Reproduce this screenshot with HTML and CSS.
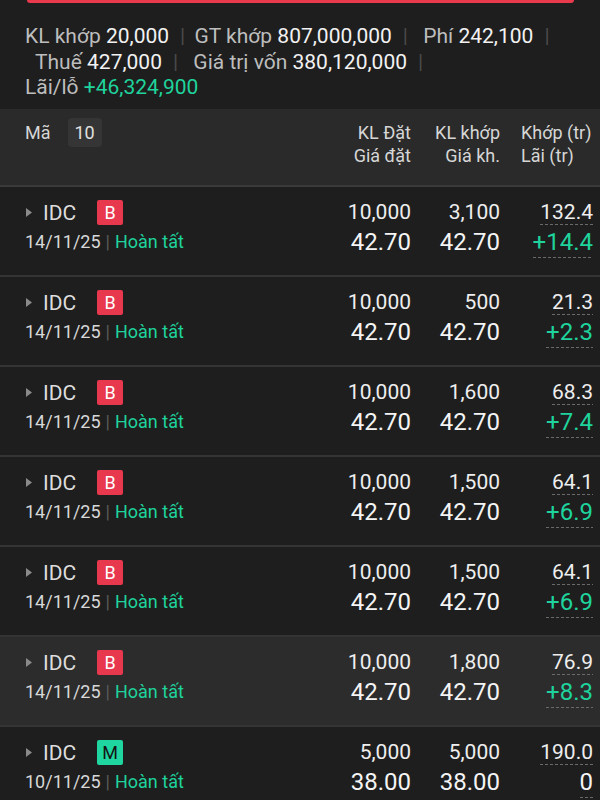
FILE: index.html
```html
<!DOCTYPE html>
<html lang="vi">
<head>
  <meta charset="UTF-8">
  <meta name="viewport" content="width=device-width, initial-scale=1.0">
  <title>Lệnh khớp</title>
  <link rel="stylesheet" href="styles.css">
</head>
<body>
  <div class="topbar"></div>

  <div class="summary">
    <div class="sum-line">
      <span class="lbl">KL khớp</span> <span class="val">20,000</span><span class="sep">|</span>
      <span class="lbl">GT khớp</span> <span class="val">807,000,000</span><span class="sep">|</span>
      <span class="lbl wide">Phí</span> <span class="val">242,100</span><span class="sep">|</span>
    </div>
    <div class="sum-line indent">
      <span class="lbl">Thuế</span> <span class="val">427,000</span><span class="sep">|</span>
      <span class="lbl wide">Giá trị vốn</span> <span class="val">380,120,000</span><span class="sep">|</span>
    </div>
    <div class="sum-line">
      <span class="lbl">Lãi/lỗ</span> <span class="val up">+46,324,900</span>
    </div>
  </div>

  <div class="thead">
    <div class="th-code">Mã <span class="count">10</span></div>
    <div class="th-num">KL Đặt<br>Giá đặt</div>
    <div class="th-num">KL khớp<br>Giá kh.</div>
    <div class="th-last">Khớp (tr)<br>Lãi (tr)</div>
  </div>

  <div class="list">
    <div class="row">
      <div class="code"><svg class="caret" width="6" height="9" viewBox="0 0 6 9"><path d="M0 0L6 4.5L0 9Z"/></svg>IDC<span class="side buy">B</span></div>
      <div class="n1">10,000</div>
      <div class="n1">3,100</div>
      <div class="n1 last"><span class="dash">132.4</span></div>
      <div class="meta">14/11/25<span class="bar">|</span><span class="status">Hoàn tất</span></div>
      <div class="n2">42.70</div>
      <div class="n2">42.70</div>
      <div class="n2 last"><span class="dash up">+14.4</span></div>
    </div>
    <div class="row">
      <div class="code"><svg class="caret" width="6" height="9" viewBox="0 0 6 9"><path d="M0 0L6 4.5L0 9Z"/></svg>IDC<span class="side buy">B</span></div>
      <div class="n1">10,000</div>
      <div class="n1">500</div>
      <div class="n1 last"><span class="dash">21.3</span></div>
      <div class="meta">14/11/25<span class="bar">|</span><span class="status">Hoàn tất</span></div>
      <div class="n2">42.70</div>
      <div class="n2">42.70</div>
      <div class="n2 last"><span class="dash up">+2.3</span></div>
    </div>
    <div class="row">
      <div class="code"><svg class="caret" width="6" height="9" viewBox="0 0 6 9"><path d="M0 0L6 4.5L0 9Z"/></svg>IDC<span class="side buy">B</span></div>
      <div class="n1">10,000</div>
      <div class="n1">1,600</div>
      <div class="n1 last"><span class="dash">68.3</span></div>
      <div class="meta">14/11/25<span class="bar">|</span><span class="status">Hoàn tất</span></div>
      <div class="n2">42.70</div>
      <div class="n2">42.70</div>
      <div class="n2 last"><span class="dash up">+7.4</span></div>
    </div>
    <div class="row">
      <div class="code"><svg class="caret" width="6" height="9" viewBox="0 0 6 9"><path d="M0 0L6 4.5L0 9Z"/></svg>IDC<span class="side buy">B</span></div>
      <div class="n1">10,000</div>
      <div class="n1">1,500</div>
      <div class="n1 last"><span class="dash">64.1</span></div>
      <div class="meta">14/11/25<span class="bar">|</span><span class="status">Hoàn tất</span></div>
      <div class="n2">42.70</div>
      <div class="n2">42.70</div>
      <div class="n2 last"><span class="dash up">+6.9</span></div>
    </div>
    <div class="row">
      <div class="code"><svg class="caret" width="6" height="9" viewBox="0 0 6 9"><path d="M0 0L6 4.5L0 9Z"/></svg>IDC<span class="side buy">B</span></div>
      <div class="n1">10,000</div>
      <div class="n1">1,500</div>
      <div class="n1 last"><span class="dash">64.1</span></div>
      <div class="meta">14/11/25<span class="bar">|</span><span class="status">Hoàn tất</span></div>
      <div class="n2">42.70</div>
      <div class="n2">42.70</div>
      <div class="n2 last"><span class="dash up">+6.9</span></div>
    </div>
    <div class="row active">
      <div class="code"><svg class="caret" width="6" height="9" viewBox="0 0 6 9"><path d="M0 0L6 4.5L0 9Z"/></svg>IDC<span class="side buy">B</span></div>
      <div class="n1">10,000</div>
      <div class="n1">1,800</div>
      <div class="n1 last"><span class="dash">76.9</span></div>
      <div class="meta">14/11/25<span class="bar">|</span><span class="status">Hoàn tất</span></div>
      <div class="n2">42.70</div>
      <div class="n2">42.70</div>
      <div class="n2 last"><span class="dash up">+8.3</span></div>
    </div>
    <div class="row">
      <div class="code"><svg class="caret" width="6" height="9" viewBox="0 0 6 9"><path d="M0 0L6 4.5L0 9Z"/></svg>IDC<span class="side sell">M</span></div>
      <div class="n1">5,000</div>
      <div class="n1">5,000</div>
      <div class="n1 last"><span class="dash">190.0</span></div>
      <div class="meta">10/11/25<span class="bar">|</span><span class="status">Hoàn tất</span></div>
      <div class="n2">38.00</div>
      <div class="n2">38.00</div>
      <div class="n2 last"><span class="dash">0</span></div>
    </div>
  </div>
</body>
</html>
```

FILE: styles.css
```css
body {
  margin: 0;
  background-color: #1e1e1e;
  color: #eeeeee;
  font-family: Roboto, "Noto Sans", sans-serif;
  overflow: hidden;
}

.topbar {
  height: 3px;
  margin: 0 26px 0 27px;
  background-color: #e8394d;
  border-radius: 0 0 6px 6px;
}

/* summary */
.summary {
  padding: 21px 20px 8px 25px;
  font-size: 21px;
  line-height: 25.5px;
}

.sum-line {
  white-space: nowrap;
}

.sum-line.indent {
  padding-left: 10px;
}

.lbl {
  color: #bdbdbd;
}

.lbl.wide {
  margin-left: 6px;
}

.val {
  color: #f2f2f2;
}

.sep {
  color: #4a4a4a;
  margin: 0 4px 0 11px;
}

.up {
  color: #1fd39c;
}

/* table head */
.thead,
.row {
  display: grid;
  grid-template-columns: 1fr 120px 89px 93px;
  padding-left: 25px;
  padding-right: 7px;
}

.thead {
  background-color: #2a2a2a;
  border-bottom: 2px solid #3a3a3a;
  padding-top: 12px;
  padding-bottom: 18px;
  font-size: 18px;
  line-height: 23px;
  color: #d6d6d6;
}

.th-code {
  display: flex;
  align-items: center;
  align-self: start;
  margin-top: -3px;
}

.count {
  display: inline-block;
  margin-left: 17px;
  width: 34px;
  height: 29px;
  line-height: 29px;
  text-align: center;
  background-color: #353535;
  border-radius: 4px;
  color: #e0e0e0;
}

.th-num {
  text-align: right;
}

.th-last {
  padding-left: 21px;
}

/* rows */
.row {
  grid-template-rows: 26px 34px;
  padding-top: 12px;
  padding-bottom: 16px;
  border-bottom: 2px solid #343434;
}

.row.active {
  background-color: #2c2c2c;
}

.code {
  display: flex;
  align-items: center;
  font-size: 21px;
  color: #dddddd;
  margin-top: 2px;
}

.caret {
  fill: #8a8a8a;
  margin: 0 11px 0 1px;
}

.side {
  display: inline-block;
  margin-left: 21px;
  width: 26px;
  height: 25px;
  line-height: 25px;
  text-align: center;
  font-size: 18px;
  border-radius: 2px;
}

.side.buy {
  background-color: #e8384d;
  color: #ffffff;
}

.side.sell {
  background-color: #1fd6a0;
  color: #141414;
}

.meta {
  display: flex;
  align-items: center;
  font-size: 18px;
  color: #d8d8d8;
}

.bar {
  color: #5a5a5a;
  margin: 0 5px;
}

.status {
  color: #1fd39c;
}

.n1,
.n2 {
  text-align: right;
  line-height: 26px;
}

.n1 {
  font-size: 21px;
  color: #eeeeee;
}

.n2 {
  font-size: 24px;
  line-height: 34px;
  color: #f4f4f4;
}

.dash {
  display: inline-block;
  background-image: repeating-linear-gradient(to right, #6a6a6a 0 3px, transparent 3px 5px);
  background-size: 100% 1px;
  background-position: left bottom;
  background-repeat: no-repeat;
}

.n2 .dash {
  line-height: 32px;
}
```
